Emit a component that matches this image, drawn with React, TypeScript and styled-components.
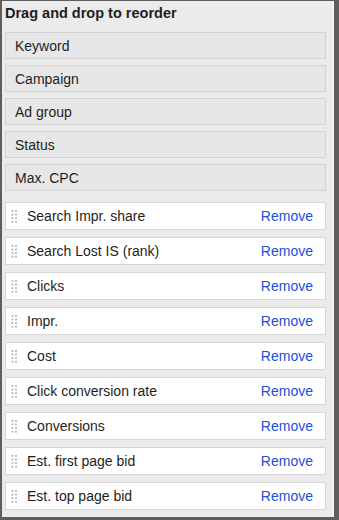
import React from 'react';
import styled, { createGlobalStyle } from 'styled-components';

const GlobalStyle = createGlobalStyle`
  html, body {
    margin: 0;
    padding: 0;
    background: #5e5e5e;
  }
  body {
    font-family: "Liberation Sans", Arial, sans-serif;
  }
`;

const Frame = styled.div`
  width: 339px;
  height: 520px;
  box-sizing: border-box;
  padding: 1px 5px 3px 2px;
  background: #5e5e5e;
`;

const Panel = styled.div`
  height: 100%;
  box-sizing: border-box;
  background: #ebebeb;
  border-right: 2px solid #f4f4f4;
  padding: 0 6px 0 3px;
  display: flex;
  flex-direction: column;
`;

const Title = styled.div`
  font-size: 14.5px;
  font-weight: bold;
  color: #1e1e1e;
  height: 31px;
  line-height: 24px;
`;

const FixedList = styled.div`
  display: flex;
  flex-direction: column;
  gap: 6px;
`;

const FixedItem = styled.div`
  height: 27px;
  box-sizing: border-box;
  border: 1px solid #d3d3d3;
  background: #e7e7e7;
  padding-left: 9px;
  display: flex;
  align-items: center;
  font-size: 14px;
  color: #1e1e1e;
`;

const MovableList = styled.div`
  margin-top: 11px;
  display: flex;
  flex-direction: column;
  gap: 7px;
`;

const MovableItem = styled.div`
  height: 28px;
  box-sizing: border-box;
  border: 1px solid #d6d6d6;
  background: #fff;
  padding: 0 12px 0 5px;
  display: flex;
  align-items: center;
  font-size: 14px;
  color: #1e1e1e;
`;

const Label = styled.span`
  flex: 1;
  margin-left: 9px;
`;

const RemoveLink = styled.a`
  color: #2150d4;
  text-decoration: none;
  cursor: pointer;
`;

const Handle = () => (
  <svg width="7" height="15" viewBox="0 0 7 15">
    {[0, 1, 2, 3].map((r) =>
      [0, 1].map((c) => (
        <rect key={`${r}-${c}`} x={c * 3.6 + 0.5} y={r * 3.6 + 1} width="1.8" height="1.8" fill="#b3b3b3" />
      ))
    )}
  </svg>
);

const fixedColumns = ['Keyword', 'Campaign', 'Ad group', 'Status', 'Max. CPC'];

const movableColumns = [
  'Search Impr. share',
  'Search Lost IS (rank)',
  'Clicks',
  'Impr.',
  'Cost',
  'Click conversion rate',
  'Conversions',
  'Est. first page bid',
  'Est. top page bid',
];

export default function App() {
  return (
    <>
      <GlobalStyle />
      <Frame>
        <Panel>
          <Title>Drag and drop to reorder</Title>
          <FixedList>
            {fixedColumns.map((name) => (
              <FixedItem key={name}>{name}</FixedItem>
            ))}
          </FixedList>
          <MovableList>
            {movableColumns.map((name) => (
              <MovableItem key={name}>
                <Handle />
                <Label>{name}</Label>
                <RemoveLink>Remove</RemoveLink>
              </MovableItem>
            ))}
          </MovableList>
        </Panel>
      </Frame>
    </>
  );
}
